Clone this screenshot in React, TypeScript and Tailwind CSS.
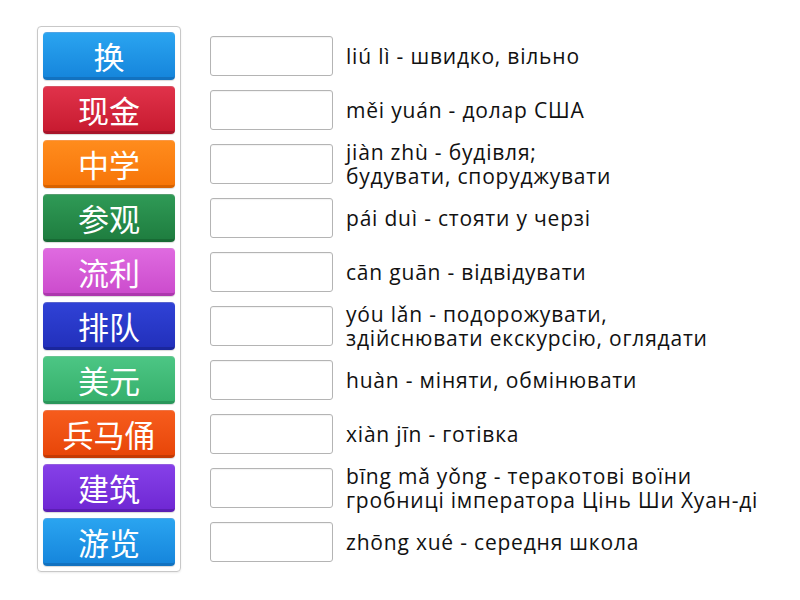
const tiles = [
  { label: "换", cls: "from-[#2aa4f0] to-[#1686dc] border-b-[#1272c0]" },
  { label: "现金", cls: "from-[#e0324a] to-[#c81a30] border-b-[#a8142a]" },
  { label: "中学", cls: "from-[#ff8c1c] to-[#f77608] border-b-[#d86200]" },
  { label: "参观", cls: "from-[#2f9a56] to-[#1f7e40] border-b-[#186a34]" },
  { label: "流利", cls: "from-[#df6ae0] to-[#cc4ccd] border-b-[#ad38ae]" },
  { label: "排队", cls: "from-[#3042d6] to-[#2230bc] border-b-[#1a269c]" },
  { label: "美元", cls: "from-[#4cc684] to-[#36b06c] border-b-[#2a965a]" },
  { label: "兵马俑", cls: "from-[#f65c1c] to-[#e84608] border-b-[#c43a04]" },
  { label: "建筑", cls: "from-[#8640e8] to-[#7028d4] border-b-[#5c1eb4]" },
  { label: "游览", cls: "from-[#2aa4f0] to-[#1686dc] border-b-[#1272c0]" },
]

const answers = [
  ["liú lì - швидко, вільно"],
  ["měi yuán - долар США"],
  ["jiàn zhù - будівля;", "будувати, споруджувати"],
  ["pái duì - стояти у черзі"],
  ["cān guān - відвідувати"],
  ["yóu lǎn - подорожувати,", "здійснювати екскурсію, оглядати"],
  ["huàn - міняти, обмінювати"],
  ["xiàn jīn - готівка"],
  ["bīng mǎ yǒng - теракотові воїни", "гробниці імператора Цінь Ши Хуан-ді"],
  ["zhōng xué - середня школа"],
]

export default function App() {
  return (
    <div className="w-[800px] h-[600px] bg-white flex items-start pt-[26px] pl-[37px]">
      <div className="flex flex-col gap-[6px] p-[5px] border border-[#c8c8c8] rounded-[4px] shadow-[0_1px_2px_rgba(0,0,0,0.08)]">
        {tiles.map((t) => (
          <div
            key={t.label}
            className={`w-[132px] h-[48px] rounded-[4px] bg-gradient-to-b ${t.cls} border-b-[3px] border-t border-t-white/25 flex items-center justify-center text-white text-[31px] leading-none font-['Noto_Sans_CJK_SC',sans-serif] shadow-[0_1px_1px_rgba(0,0,0,0.15)]`}
          >
            {t.label}
          </div>
        ))}
      </div>
      <div className="flex flex-col gap-[6px] pt-[6px] ml-[29px]">
        {answers.map((lines, i) => (
          <div key={i} className="h-[48px] flex items-center">
            <div className="w-[123px] h-[40px] border border-[#b4b4b4] rounded-[3px] bg-white shrink-0 shadow-[inset_0_1px_1px_rgba(0,0,0,0.05)]" />
            <div className="ml-[13px] text-[21px] leading-[24px] tracking-[0.8px] text-[#111] whitespace-nowrap font-['Open_Sans',sans-serif]">
              {lines.map((l) => (
                <div key={l}>{l}</div>
              ))}
            </div>
          </div>
        ))}
      </div>
    </div>
  )
}
